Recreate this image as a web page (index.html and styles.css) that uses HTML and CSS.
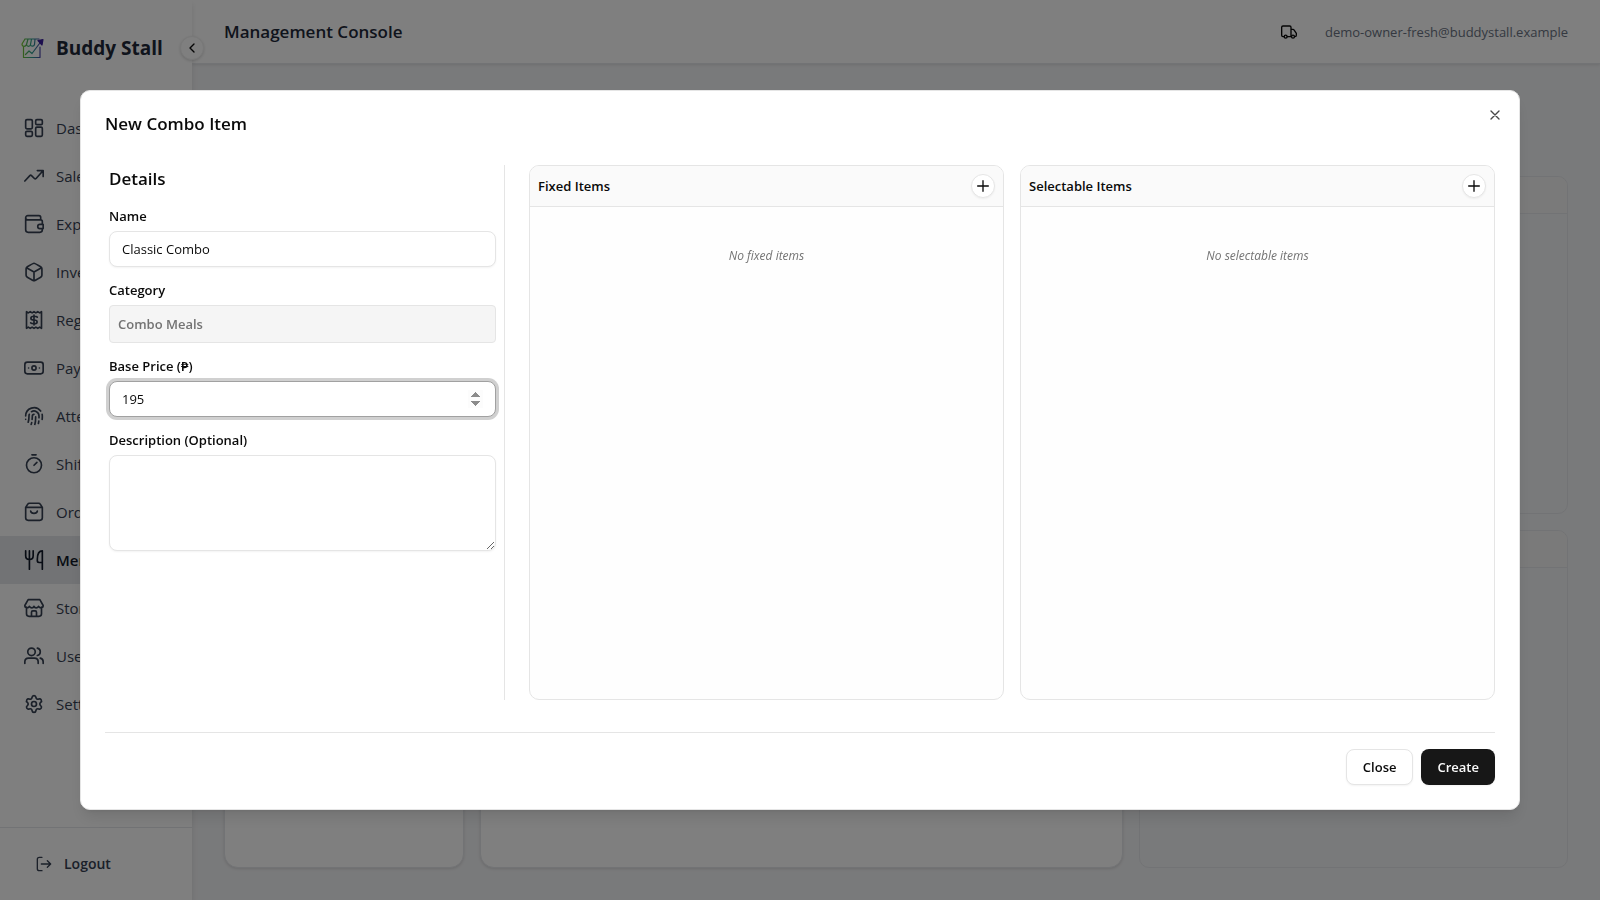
FILE: index.html
```html
<!DOCTYPE html>
<html lang="en">
<head>
<meta charset="utf-8">
<meta name="viewport" content="width=device-width, initial-scale=1">
<title>Buddy Stall</title>
<link rel="stylesheet" href="styles.css">
</head>
<body>
<div class="app">
  <aside class="sidebar">
    <div class="brand">
      <svg class="brand-logo" viewBox="0 0 24 22" fill="none" stroke="url(#brand)" stroke-width="1.2" stroke-linejoin="round" stroke-linecap="round">
        <defs><linearGradient id="brand" x1="0" y1="0" x2="24" y2="0" gradientUnits="userSpaceOnUse"><stop offset="0" stop-color="#84cc16"/><stop offset=".5" stop-color="#2a9d8f"/><stop offset="1" stop-color="#5b21b6"/></linearGradient></defs>
        <path d="M5 2h14M5 2 2 7c0 3 3.500 3 4.500.5C7 10 10 10 10.500 7.500 11 10 14 9.500 14.500 7.500M8 2 6.500 7.500M11.500 2l-1 5.500M15 2l-.5 5.500M3.500 10v10.500H20V10M5.500 17.500l3.500-3.500 3 2.500 9-12"/>
        <path d="M18 3.500 23 2.500l-1 5.500z" fill="#3b1f9e" stroke="#3b1f9e"/>
      </svg>
      <span class="brand-name">Buddy Stall</span>
    </div>
    <button class="collapse" type="button" aria-label="Collapse sidebar"><svg class="icon-16" viewBox="0 0 24 24"><path d="m15 18-6-6 6-6"/></svg></button>
    <nav class="nav">
      <a class="nav-item" href="#"><svg class="icon-20" viewBox="0 0 24 24"><rect x="2" y="2" width="8" height="11" rx="1.500"/><rect x="14" y="2" width="8" height="6" rx="1.500"/><rect x="14" y="11" width="8" height="11" rx="1.500"/><rect x="2" y="16" width="8" height="6" rx="1.500"/></svg>Dashboard</a>
      <a class="nav-item" href="#"><svg class="icon-20" viewBox="0 0 24 24"><path d="m1 18 6-6.500q1-1 2 0l3.500 3.500q1 1 2 0l8-9M16 5.500h7v7"/></svg>Sales</a>
      <a class="nav-item" href="#"><svg class="icon-20" viewBox="0 0 24 24"><path d="M20 7V4a2 2 0 0 0-2-2H4.500a2.500 2.500 0 0 0 0 5H20a2 2 0 0 1 2 2v3M2 4.500V19a3 3 0 0 0 3 3h14a3 3 0 0 0 3-3v-1M23 12.500h-4a2.500 2.500 0 0 0 0 5h4z"/></svg>Expenses</a>
      <a class="nav-item" href="#"><svg class="icon-20" viewBox="0 0 24 24"><path d="M12 1.500q1 0 8 4.300 1.500.9 1.500 2.200v8q0 1.300-1.500 2.200-7 4.300-8 4.300t-8-4.300q-1.500-.9-1.500-2.200V8q0-1.300 1.500-2.200 7-4.300 8-4.300zM12 12v10M12 12l9-5M12 12 3 7"/></svg>Inventory</a>
      <a class="nav-item" href="#"><svg class="icon-20" viewBox="0 0 24 24"><path d="M3 2v20l2.250-1.500L7.500 22l2.250-1.500L12 22l2.250-1.500L16.500 22l2.250-1.500L21 22V2l-2.250 1.500L16.500 2l-2.250 1.500L12 2 9.750 3.500 7.500 2 5.250 3.500zM16 8.500C15 7.500 13.500 7.500 12 7.500c-5 0-5 4.500 0 4.500s5 4.500 0 4.500c-1.500 0-3 0-4-1M12 6v12"/></svg>Register</a>
      <a class="nav-item" href="#"><svg class="icon-20" viewBox="0 0 24 24"><rect x="1" y="5" width="22" height="14" rx="3"/><circle cx="12" cy="12" r="2.500"/><path d="M5.500 12h.01M18.500 12h.01"/></svg>Payments</a>
      <a class="nav-item" href="#"><svg class="icon-20" viewBox="0 0 24 24"><path d="M12 10a2 2 0 0 0-2 2c0 1.020-.1 2.510-.26 4M14 13.120c0 2.380 0 6.380-1 8.880M17.290 21.020c.12-.6.430-2.300.5-3.020M2 12a10 10 0 0 1 18-6M2 16h.01M21.800 16c.2-2 .131-5.354 0-6M5 19.500C5.500 18 6 15 6 12a6 6 0 0 1 .34-2M8.650 22c.21-.66.450-1.320.570-2M9 6.800a6 6 0 0 1 9 5.200v2"/></svg>Attendance</a>
      <a class="nav-item" href="#"><svg class="icon-20" viewBox="0 0 24 24"><circle cx="12" cy="13.500" r="9"/><path d="M9.500 1h5M12 13.500l3.500-3.500"/></svg>Shifts</a>
      <a class="nav-item" href="#"><svg class="icon-20" viewBox="0 0 24 24"><path d="M2 6.500V19a3 3 0 0 0 3 3h14a3 3 0 0 0 3-3V6.500zM2 6.500 4.500 2.500Q5 1.500 6.500 1.500h11q1.500 0 2 1L22 6.500M8 11c.5 3.500 7.500 3.500 8 0"/></svg>Orders</a>
      <a class="nav-item active" href="#" aria-current="page"><svg class="icon-20" viewBox="0 0 24 24"><path d="M6.500 1v22M2 1v6c0 3 2 4.500 4.500 4.500S11 10 11 7V1M22 23V1c-4 0-6 4-6 10v2q0 2 2 2h4"/></svg>Menu</a>
      <a class="nav-item" href="#"><svg class="icon-20" viewBox="0 0 24 24"><path d="M3 11v8a3 3 0 0 0 3 3h12a3 3 0 0 0 3-3v-8M5 2h14l4 7c0 3.500-4 3.500-5.500 1-1.500 2.500-4.500 2.500-5.500 0-1 2.500-4 2.500-5.500 0C5 12.500 1 12.500 1 9zM9 22v-5q0-1.500 1.500-1.500h3q1.500 0 1.500 1.500v5"/></svg>Stores</a>
      <a class="nav-item" href="#"><svg class="icon-20" viewBox="0 0 24 24"><circle cx="9" cy="7" r="4.500"/><path d="M1 21v-2c0-3 2-4.500 4.500-4.500h7c2.500 0 4.500 1.500 4.500 4.500v2M23 21v-2c0-2.500-1-4-3.500-4.500M16 2.600a4.500 4.500 0 0 1 0 8.800"/></svg>Users</a>
      <a class="nav-item" href="#"><svg class="icon-20" viewBox="0 0 24 24"><path d="M9.671 4.136a2.340 2.340 0 0 1 4.659 0 2.340 2.340 0 0 0 3.319 1.915 2.340 2.340 0 0 1 2.330 4.033 2.340 2.340 0 0 0 0 3.831 2.340 2.340 0 0 1-2.330 4.033 2.340 2.340 0 0 0-3.319 1.915 2.340 2.340 0 0 1-4.659 0 2.340 2.340 0 0 0-3.320-1.915 2.340 2.340 0 0 1-2.330-4.033 2.340 2.340 0 0 0 0-3.831A2.340 2.340 0 0 1 6.350 6.051a2.340 2.340 0 0 0 3.319-1.915"/><circle cx="12" cy="12" r="3"/></svg>Settings</a>
    </nav>
    <div class="sidebar-foot">
      <button class="logout" type="button"><svg class="icon-16" viewBox="0 0 24 24"><path d="M9 2H5a3 3 0 0 0-3 3v14a3 3 0 0 0 3 3h4M8 12h14M17 7l5 5-5 5"/></svg>Logout</button>
    </div>
  </aside>
  <div class="page">
    <header class="topbar">
      <h1 class="topbar-title">Management Console</h1>
      <div class="account">
        <svg class="icon-16" viewBox="0 0 24 24"><path d="M4.500 19H3a2 2 0 0 1-2-2V5a2 2 0 0 1 2-2h10a2 2 0 0 1 2 2v14M9.500 19h5M15 8h3q1 0 2 1.500l3 4.500v3a2 2 0 0 1-2 2"/><circle cx="7" cy="19" r="2.200"/><circle cx="18" cy="19" r="2.200"/></svg>
        <span>demo-owner-fresh@buddystall.example</span>
      </div>
    </header>
    <main class="board">
      <section class="card"></section>
      <section class="card"></section>
      <div class="stack">
        <section class="slot"><div class="slot-head"></div></section>
        <section class="slot"><div class="slot-head"></div></section>
      </div>
    </main>
  </div>
</div>

<div class="overlay">
  <form class="dialog" role="dialog" aria-modal="true" aria-labelledby="dialog-title">
    <h2 class="dialog-title" id="dialog-title">New Combo Item</h2>
    <button class="dismiss" type="button" aria-label="Dismiss"><svg class="icon-16" viewBox="0 0 24 24"><path d="M18 6 6 18M6 6l12 12"/></svg></button>
    <div class="dialog-body">
      <div class="details">
        <h3 class="details-title">Details</h3>
        <div class="field">
          <label for="name">Name</label>
          <input class="control" id="name" type="text" value="Classic Combo">
        </div>
        <div class="field">
          <label for="category">Category</label>
          <input class="control fixed" id="category" type="text" value="Combo Meals" disabled>
        </div>
        <div class="field">
          <label for="price">Base Price (₱)</label>
          <input class="control focused" id="price" type="number" value="195">
        </div>
        <div class="field">
          <label for="description">Description (Optional)</label>
          <textarea class="control area" id="description"></textarea>
        </div>
      </div>
      <div class="panels">
        <section class="panel">
          <div class="panel-head"><h4>Fixed Items</h4><button class="add" type="button" aria-label="Add fixed item"><svg class="icon-16" viewBox="0 0 24 24"><path d="M4 12h16M12 4v16"/></svg></button></div>
          <p class="empty">No fixed items</p>
        </section>
        <section class="panel">
          <div class="panel-head"><h4>Selectable Items</h4><button class="add" type="button" aria-label="Add selectable item"><svg class="icon-16" viewBox="0 0 24 24"><path d="M4 12h16M12 4v16"/></svg></button></div>
          <p class="empty">No selectable items</p>
        </section>
      </div>
    </div>
    <div class="dialog-foot">
      <button class="btn" type="button">Close</button>
      <button class="btn primary" type="submit">Create</button>
    </div>
  </form>
</div>
</body>
</html>
```
FILE: styles.css
```css
* { box-sizing: border-box; margin: 0; }

body {
  font-family: "Open Sans", "Noto Sans", sans-serif;
  font-size: 13px;
  line-height: 20px;
  color: #0a0a0a;
}

button, input, textarea { font: inherit; color: inherit; }
button { padding: 0; border: 0; background: none; }
a { color: inherit; text-decoration: none; }

svg { flex: none; }
.icon-16, .icon-20 {
  fill: none;
  stroke: currentColor;
  stroke-width: 2;
  stroke-linecap: round;
  stroke-linejoin: round;
}
.icon-16 { width: 16px; height: 16px; }
.icon-20 { width: 20px; height: 20px; }

.app { display: flex; height: 100vh; background: #f3f4f6; }

.sidebar {
  position: relative;
  z-index: 1;
  display: flex;
  flex-direction: column;
  width: 192px;
  flex: none;
  background: #fff;
  box-shadow: 0 4px 6px rgba(0, 0, 0, .1);
  color: #364153;
}
.brand { display: flex; align-items: center; gap: 12px; height: 96px; padding-left: 20px; }
.brand-logo { width: 24px; height: 22px; }
.brand-name { font-size: 19px; line-height: 28px; font-weight: 700; color: #1e2939; white-space: nowrap; }
.collapse {
  position: absolute;
  top: 36px;
  right: -12px;
  display: grid;
  place-items: center;
  width: 24px;
  height: 24px;
  border: 1px solid #f0f0f0;
  border-radius: 50%;
  background: #fff;
  box-shadow: 0 1px 3px rgba(0, 0, 0, .15);
  color: #0a0a0a;
}
.nav { flex: 1; padding-top: 8px; }
.nav-item { display: flex; align-items: center; gap: 12px; height: 48px; padding-left: 24px; font-size: 15px; }
.nav-item.active { background: #e5e7eb; color: #101828; font-weight: 600; }
.sidebar-foot { padding: 16px; border-top: 1px solid #e5e7eb; }
.logout { display: flex; align-items: center; gap: 12px; height: 40px; padding-left: 20px; font-size: 14px; font-weight: 600; }

.page { display: flex; flex-direction: column; flex: 1; min-width: 0; }
.topbar {
  display: flex;
  align-items: center;
  justify-content: space-between;
  height: 64px;
  padding: 0 32px;
  border-bottom: 1px solid #e5e7eb;
  background: #fff;
  box-shadow: 0 1px 3px rgba(0, 0, 0, .1);
}
.topbar-title { font-size: 17px; line-height: 28px; font-weight: 600; color: #1e2939; }
.account { display: flex; align-items: center; gap: 28px; color: #6a7282; }
.account svg { color: #0a0a0a; }

.board { flex: 1; display: grid; grid-template-columns: 240px 3fr 2fr; gap: 16px; padding: 112px 32px 32px; }
.card { border: 1px solid #e5e7eb; border-radius: 14px; background: #fff; box-shadow: 0 1px 3px rgba(0, 0, 0, .12); }
.stack { display: grid; grid-template-rows: 1fr 1fr; gap: 16px; }
.slot { border: 1px solid #e5e7eb; border-radius: 10px; overflow: hidden; }
.slot-head { height: 37px; border-bottom: 1px solid #e5e7eb; background: #f5f5f4; }

.overlay { position: fixed; inset: 0; z-index: 2; display: grid; place-items: center; background: rgba(0, 0, 0, .5); }
.dialog {
  position: relative;
  display: flex;
  flex-direction: column;
  width: 90vw;
  height: 80vh;
  padding: 24px;
  border: 1px solid #e5e5e5;
  border-radius: 10px;
  background: #fff;
  box-shadow: 0 10px 15px -3px rgba(0, 0, 0, .1), 0 4px 6px -4px rgba(0, 0, 0, .1);
}
.dialog-title { font-size: 17px; line-height: 18px; font-weight: 600; }
.dismiss { position: absolute; top: 16px; right: 16px; width: 16px; height: 16px; color: #474747; }
.dismiss svg { display: block; }
.dialog-body { flex: 1; display: flex; gap: 24px; min-height: 0; margin: 32px 0; }

.details {
  display: flex;
  flex-direction: column;
  gap: 16px;
  width: 400px;
  padding: 0 8px 0 4px;
  border-right: 1px solid #e5e5e5;
}
.details-title { font-size: 17px; line-height: 28px; font-weight: 600; }
.field { display: flex; flex-direction: column; gap: 8px; }
.field label { line-height: 14px; font-weight: 600; }
.control {
  width: 100%;
  height: 36px;
  padding: 4px 12px;
  border: 1px solid #e5e5e5;
  border-radius: 8px;
  background: #fff;
  box-shadow: 0 1px 2px rgba(0, 0, 0, .05);
  outline: none;
}
.control.fixed { height: 38px; padding: 8px; border-radius: 4px; background: #f5f5f5; box-shadow: none; color: #737373; font-weight: 600; }
.control.focused { border-color: #a1a1a1; box-shadow: 0 0 0 3px rgba(161, 161, 161, .5); }
.control.focused::-webkit-inner-spin-button { opacity: 1; }
.control.area { display: block; height: 96px; padding: 8px 12px; resize: vertical; }

.panels { flex: 1; display: grid; grid-template-columns: 1fr 1fr; gap: 16px; }
.panel { border: 1px solid #e5e5e5; border-radius: 10px; background: #fefefe; overflow: hidden; }
.panel-head {
  display: flex;
  align-items: center;
  justify-content: space-between;
  padding: 8px;
  border-bottom: 1px solid #e5e5e5;
  background: #fafafa;
}
.panel-head h4 { font-size: 13px; font-weight: 600; }
.add {
  display: grid;
  place-items: center;
  width: 24px;
  height: 24px;
  border: 1px solid #e5e5e5;
  border-radius: 50%;
  background: #fff;
  box-shadow: 0 1px 2px rgba(0, 0, 0, .05);
}
.empty { padding-top: 41px; font-size: 12px; line-height: 16px; font-style: italic; text-align: center; color: #737373; }

.dialog-foot { display: flex; justify-content: flex-end; gap: 8px; padding-top: 16px; border-top: 1px solid #e5e5e5; }
.btn { height: 36px; padding: 0 16px; border: 1px solid #e5e5e5; border-radius: 8px; background: #fff; box-shadow: 0 1px 2px rgba(0, 0, 0, .05); font-weight: 600; }
.btn.primary { border: 0; background: #171717; color: #fafafa; }
```
